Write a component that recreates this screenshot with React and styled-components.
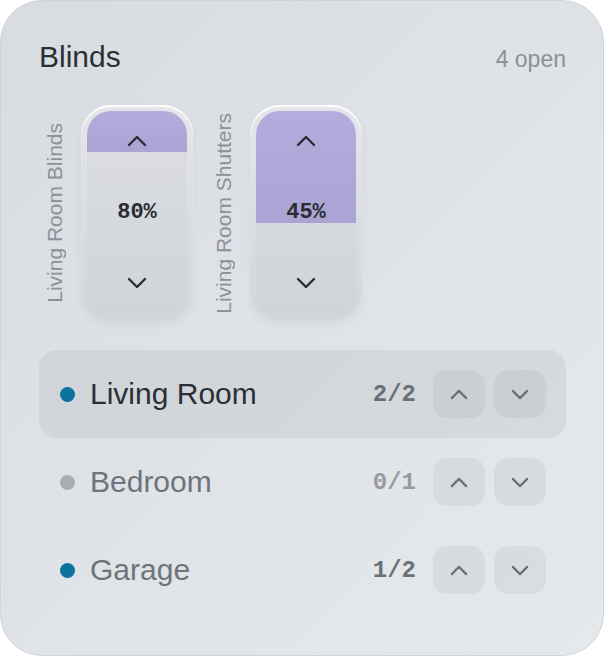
import React from 'react';
import styled, { createGlobalStyle } from 'styled-components';

const GlobalStyle = createGlobalStyle`
    html, body {
        margin: 0;
        padding: 0;
        background: #ffffff;
    }
    body {
        font-family: "Liberation Sans", Arial, sans-serif;
    }
`

const Card = styled.div`
    box-sizing: border-box;
    width: 604px;
    height: 656px;
    padding: 38px 37px 0 38px;
    border: 1.5px solid #cfd4da;
    border-radius: 42px;
    background: linear-gradient(135deg, #d8dce1 0%, #e0e3e7 55%, #e6e9ec 100%);
`

const Header = styled.div`
    display: flex;
    justify-content: space-between;
    align-items: baseline;
    line-height: 36px;
`

const Title = styled.h2`
    margin: 0;
    font-size: 30px;
    font-weight: 400;
    color: #2b2f35;
`

const OpenCount = styled.span`
    font-size: 23px;
    color: #8c9096;
`

const SliderRow = styled.div`
    display: flex;
    gap: 18px;
    margin-top: 28px;
    padding-left: 3px;
`

const SliderGroup = styled.div`
    display: flex;
    align-items: center;
    gap: 14px;
`

const VerticalLabel = styled.span`
    writing-mode: vertical-rl;
    transform: rotate(180deg);
    font-size: 21px;
    line-height: 25px;
    color: #8d9197;
    white-space: nowrap;
`

const Slider = styled.div`
    box-sizing: border-box;
    width: 112px;
    height: 216px;
    padding: 6px;
    border-radius: 30px;
    background: linear-gradient(180deg, #e4e6e9 0%, #d2d5da 100%);
    box-shadow: inset 0 2px 1px rgba(255, 255, 255, 0.95), 0 4px 8px rgba(60, 70, 90, 0.05);
`

const Track = styled.div`
    position: relative;
    height: 100%;
    border-radius: 24px;
    overflow: hidden;
    background: linear-gradient(180deg, #dcdee2 0%, #d0d3d8 100%);
`

const Fill = styled.div`
    position: absolute;
    top: 0;
    left: 0;
    right: 0;
    background: linear-gradient(180deg, #b4acdc 0%, #aaa3d4 100%);
`

const TrackContent = styled.div`
    position: relative;
    height: 100%;
    display: flex;
    flex-direction: column;
    align-items: center;
    justify-content: space-between;
    padding: 24px 0 26px;
    box-sizing: border-box;
    color: #2a2d33;
`

const Percent = styled.span`
    font-family: "Liberation Mono", "DejaVu Sans Mono", monospace;
    font-weight: 700;
    font-size: 22px;
    color: #2a2d33;
`

const RoomList = styled.div`
    display: flex;
    flex-direction: column;
    margin-top: 29px;
`

const Room = styled.div`
    display: flex;
    align-items: center;
    height: 88px;
    box-sizing: border-box;
    padding: 0 20px 0 21px;
    border-radius: 18px;
    background: ${p => (p.$active ? 'rgba(120, 128, 140, 0.12)' : 'transparent')};
`

const Dot = styled.span`
    width: 15px;
    height: 15px;
    border-radius: 50%;
    background: ${p => (p.$on ? '#0e72a0' : '#a9adb2')};
    flex-shrink: 0;
`

const RoomName = styled.span`
    margin-left: 15px;
    flex: 1;
    font-size: 30px;
    color: ${p => (p.$active ? '#2b2f35' : '#6f747b')};
`

const Count = styled.span`
    font-family: "Liberation Mono", "DejaVu Sans Mono", monospace;
    font-weight: 700;
    font-size: 24px;
    color: ${p => (p.$muted ? '#979ba1' : '#6b7078')};
    margin-right: 17px;
`

const Buttons = styled.div`
    display: flex;
    gap: 9px;
`

const RoundButton = styled.button`
    width: 52px;
    height: 48px;
    border: none;
    border-radius: 14px;
    padding: 0;
    display: flex;
    align-items: center;
    justify-content: center;
    background: rgba(120, 128, 140, 0.1);
    color: #6b7078;
`

const Chevron = ({ up, size = 18, weight = 2.4 }) => (
    <svg width={size} height={size / 2 + 2} viewBox="0 0 20 12" fill="none">
        <polyline
            points={up ? '2 10 10 2 18 10' : '2 2 10 10 18 2'}
            stroke="currentColor"
            strokeWidth={weight * (20 / size)}
            strokeLinecap="round"
            strokeLinejoin="round"
        />
    </svg>
)

const blinds = [
    { name: 'Living Room Blinds', pct: 80 },
    { name: 'Living Room Shutters', pct: 45 },
]

const rooms = [
    { name: 'Living Room', count: '2/2', on: true, active: true },
    { name: 'Bedroom', count: '0/1', on: false },
    { name: 'Garage', count: '1/2', on: true },
]

export default function App() {
    return (
        <>
            <GlobalStyle />
            <Card>
                <Header>
                    <Title>Blinds</Title>
                    <OpenCount>4 open</OpenCount>
                </Header>
                <SliderRow>
                    {blinds.map(b => (
                        <SliderGroup key={b.name}>
                            <VerticalLabel>{b.name}</VerticalLabel>
                            <Slider>
                                <Track>
                                    <Fill style={{ height: `${100 - b.pct}%` }} />
                                    <TrackContent>
                                        <Chevron up size={20} weight={2.4} />
                                        <Percent>{b.pct}%</Percent>
                                        <Chevron size={20} weight={2.4} />
                                    </TrackContent>
                                </Track>
                            </Slider>
                        </SliderGroup>
                    ))}
                </SliderRow>
                <RoomList>
                    {rooms.map(r => (
                        <Room key={r.name} $active={r.active}>
                            <Dot $on={r.on} />
                            <RoomName $active={r.active}>{r.name}</RoomName>
                            <Count $muted={r.count.startsWith('0')}>{r.count}</Count>
                            <Buttons>
                                <RoundButton><Chevron up size={18} weight={2.2} /></RoundButton>
                                <RoundButton><Chevron size={18} weight={2.2} /></RoundButton>
                            </Buttons>
                        </Room>
                    ))}
                </RoomList>
            </Card>
        </>
    );
}
